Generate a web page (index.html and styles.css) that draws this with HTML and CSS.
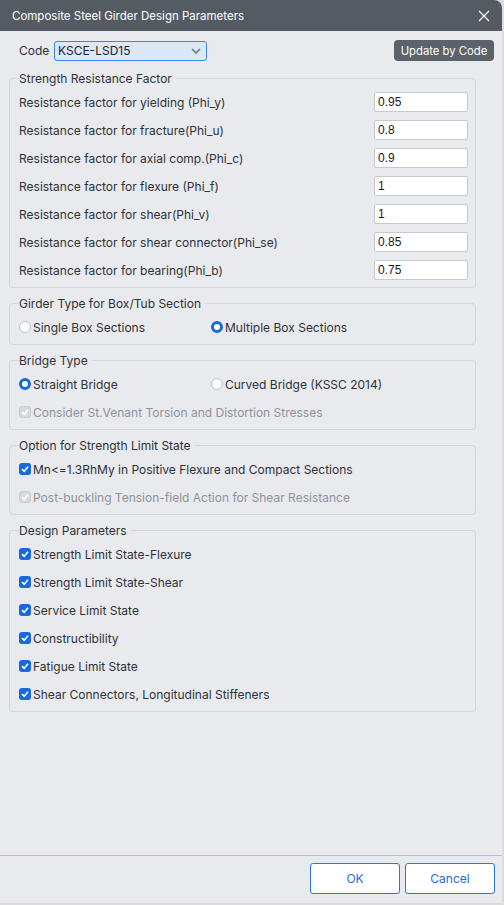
FILE: index.html
```html
<!DOCTYPE html>
<html>
<head>
<meta charset="utf-8">
<link rel="stylesheet" href="styles.css">
</head>
<body>
<div class="dialog">
  <div class="titlebar">
    <span class="title">Composite Steel Girder Design Parameters</span>
    <svg class="close" width="12" height="12" viewBox="0 0 12 12"><path d="M1 1L11 11M11 1L1 11" stroke="#fff" stroke-width="1.2" fill="none"/></svg>
  </div>
  <div class="content">
    <div class="code-row">
      <span class="code-label">Code</span>
      <div class="select">
        <span>KSCE-LSD15</span>
        <svg width="10" height="6" viewBox="0 0 10 6"><path d="M1 1L5 5L9 1" stroke="#707780" stroke-width="1.6" fill="none"/></svg>
      </div>
      <div class="update-btn">Update by Code</div>
    </div>

    <fieldset class="group">
      <legend>Strength Resistance Factor</legend>
      <div class="rows">
        <div class="frow"><span>Resistance factor for yielding (Phi_y)</span><div class="input">0.95</div></div>
        <div class="frow"><span>Resistance factor for fracture(Phi_u)</span><div class="input">0.8</div></div>
        <div class="frow"><span>Resistance factor for axial comp.(Phi_c)</span><div class="input">0.9</div></div>
        <div class="frow"><span>Resistance factor for flexure (Phi_f)</span><div class="input">1</div></div>
        <div class="frow"><span>Resistance factor for shear(Phi_v)</span><div class="input">1</div></div>
        <div class="frow"><span>Resistance factor for shear connector(Phi_se)</span><div class="input">0.85</div></div>
        <div class="frow"><span>Resistance factor for bearing(Phi_b)</span><div class="input">0.75</div></div>
      </div>
    </fieldset>

    <fieldset class="group">
      <legend>Girder Type for Box/Tub Section</legend>
      <div class="rows">
        <div class="radio-row">
          <div class="opt"><span class="radio"></span>Single Box Sections</div>
          <div class="opt"><span class="radio on"></span>Multiple Box Sections</div>
        </div>
      </div>
    </fieldset>

    <fieldset class="group">
      <legend>Bridge Type</legend>
      <div class="rows">
        <div class="radio-row">
          <div class="opt"><span class="radio on"></span>Straight Bridge</div>
          <div class="opt"><span class="radio"></span>Curved Bridge (KSSC 2014)</div>
        </div>
        <div class="opt disabled"><span class="check dis"><svg width="10" height="10" viewBox="0 0 10 10"><path d="M2 5.2L4.2 7.3L8 2.8" stroke="#fff" stroke-width="1.6" fill="none"/></svg></span>Consider St.Venant Torsion and Distortion Stresses</div>
      </div>
    </fieldset>

    <fieldset class="group">
      <legend>Option for Strength Limit State</legend>
      <div class="rows">
        <div class="opt"><span class="check"><svg width="10" height="10" viewBox="0 0 10 10"><path d="M2 5.2L4.2 7.3L8 2.8" stroke="#fff" stroke-width="1.6" fill="none"/></svg></span>Mn&lt;=1.3RhMy in Positive Flexure and Compact Sections</div>
        <div class="opt disabled"><span class="check dis"><svg width="10" height="10" viewBox="0 0 10 10"><path d="M2 5.2L4.2 7.3L8 2.8" stroke="#fff" stroke-width="1.6" fill="none"/></svg></span>Post-buckling Tension-field Action for Shear Resistance</div>
      </div>
    </fieldset>

    <fieldset class="group">
      <legend>Design Parameters</legend>
      <div class="rows">
        <div class="opt"><span class="check"><svg width="10" height="10" viewBox="0 0 10 10"><path d="M2 5.2L4.2 7.3L8 2.8" stroke="#fff" stroke-width="1.6" fill="none"/></svg></span>Strength Limit State-Flexure</div>
        <div class="opt"><span class="check"><svg width="10" height="10" viewBox="0 0 10 10"><path d="M2 5.2L4.2 7.3L8 2.8" stroke="#fff" stroke-width="1.6" fill="none"/></svg></span>Strength Limit State-Shear</div>
        <div class="opt"><span class="check"><svg width="10" height="10" viewBox="0 0 10 10"><path d="M2 5.2L4.2 7.3L8 2.8" stroke="#fff" stroke-width="1.6" fill="none"/></svg></span>Service Limit State</div>
        <div class="opt"><span class="check"><svg width="10" height="10" viewBox="0 0 10 10"><path d="M2 5.2L4.2 7.3L8 2.8" stroke="#fff" stroke-width="1.6" fill="none"/></svg></span>Constructibility</div>
        <div class="opt"><span class="check"><svg width="10" height="10" viewBox="0 0 10 10"><path d="M2 5.2L4.2 7.3L8 2.8" stroke="#fff" stroke-width="1.6" fill="none"/></svg></span>Fatigue Limit State</div>
        <div class="opt"><span class="check"><svg width="10" height="10" viewBox="0 0 10 10"><path d="M2 5.2L4.2 7.3L8 2.8" stroke="#fff" stroke-width="1.6" fill="none"/></svg></span>Shear Connectors, Longitudinal Stiffeners</div>
      </div>
    </fieldset>
  </div>
  <div class="footer">
    <div class="btn">OK</div>
    <div class="btn">Cancel</div>
  </div>
</div>
</body>
</html>
```

FILE: styles.css
```css
* { box-sizing: border-box; }
html, body { margin: 0; padding: 0; }
body {
  background: #dcdcdc;
  font-family: Inter, "Noto Sans", sans-serif;
  font-size: 12px;
  color: #2e3237;
  width: 504px;
  height: 905px;
  overflow: hidden;
}
.dialog {
  width: 502px;
  height: 903px;
  background: #e9eaee;
  border-radius: 0 8px 0 0;
  display: flex;
  flex-direction: column;
  overflow: hidden;
}
.titlebar {
  height: 31px;
  background: #555b62;
  display: flex;
  align-items: center;
  justify-content: space-between;
  padding: 0 12px 0 12px;
  color: #fff;
  flex: none;
}
.title { font-size: 11.5px; letter-spacing: 0; }
.close { margin-right: 0; }
.content {
  flex: 1;
  padding: 9px 8px 0 9px;
  display: flex;
  flex-direction: column;
}
.code-row {
  display: flex;
  align-items: center;
  height: 21px;
  margin-bottom: 10px;
}
.code-label { margin-left: 10px; width: 35px; }
.select {
  width: 153px;
  height: 20px;
  border: 1px solid #3a86e6;
  border-radius: 3px;
  background: #dbe8f8;
  display: flex;
  align-items: center;
  justify-content: space-between;
  padding: 0 5px 0 3px;
  color: #1f2328;
}
.update-btn {
  margin-left: auto;
  background: #5c6269;
  color: #fff;
  height: 21px;
  width: 100px;
  border-radius: 4px;
  display: flex;
  align-items: center;
  justify-content: center;
  font-size: 11.3px;
}
.group {
  margin: 0 18px 8px 0;
  border: 1px solid #d3d6db;
  border-radius: 4px;
  padding: 0 7px 7px 9px;
  min-width: 0;
}
.group legend {
  padding: 0 4px 0 0;
  margin-left: 0;
  line-height: 15px;
  height: 15px;
  color: #2e3237;
}
.rows {
  display: flex;
  flex-direction: column;
  gap: 8px;
  padding-top: 6px;
}
.frow {
  height: 20px;
  display: flex;
  align-items: center;
  justify-content: space-between;
}
.input {
  width: 94px;
  height: 20px;
  background: #fff;
  border: 1px solid #c6cad0;
  border-radius: 2px;
  font-family: "Liberation Sans", Arial, sans-serif;
  font-size: 12px;
  color: #1a1a1a;
  display: flex;
  align-items: center;
  padding-left: 3px;
}
.radio-row {
  display: grid;
  grid-template-columns: 192px auto;
  height: 20px;
  align-items: center;
}
.opt {
  height: 20px;
  display: flex;
  align-items: center;
}
.opt.disabled { color: #8e9399; }
.radio {
  width: 12px;
  height: 12px;
  border-radius: 50%;
  background: #fff;
  border: 1px solid #b9bec5;
  margin-right: 2px;
  flex: none;
}
.radio.on {
  border: 3.5px solid #1769e0;
  background: #fff;
}
.check {
  width: 12px;
  height: 12px;
  border-radius: 3px;
  background: #1769e0;
  display: flex;
  align-items: center;
  justify-content: center;
  margin-right: 2px;
  flex: none;
}
.check.dis {
  background: #d7d9dd;
  border: 1px solid #c9ccd1;
}
.footer {
  flex: none;
  height: 48px;
  border-top: 1px solid #b9c2cb;
  display: flex;
  justify-content: flex-end;
  align-items: flex-start;
  padding: 7px 7px 0 0;
  gap: 5px;
}
.btn {
  width: 90px;
  height: 31px;
  background: #fff;
  border: 1px solid #2d74e0;
  border-radius: 3px;
  color: #2a6cd6;
  display: flex;
  align-items: center;
  justify-content: center;
  font-size: 12px;
}
```
